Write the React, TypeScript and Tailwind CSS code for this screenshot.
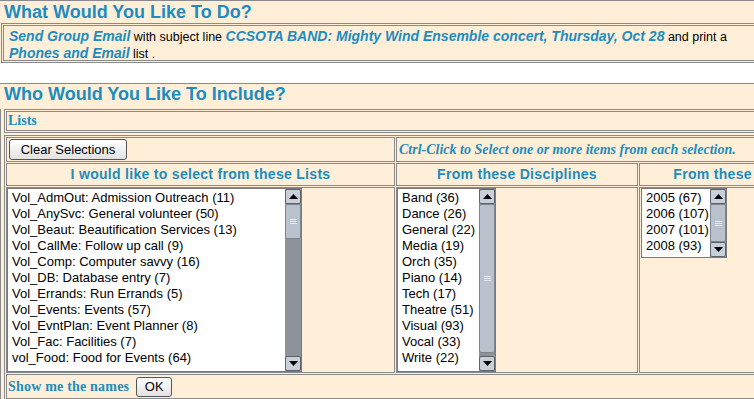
import React from 'react';

const lists = [
  'Vol_AdmOut: Admission Outreach (11)',
  'Vol_AnySvc: General volunteer (50)',
  'Vol_Beaut: Beautification Services (13)',
  'Vol_CallMe: Follow up call (9)',
  'Vol_Comp: Computer savvy (16)',
  'Vol_DB: Database entry (7)',
  'Vol_Errands: Run Errands (5)',
  'Vol_Events: Events (57)',
  'Vol_EvntPlan: Event Planner (8)',
  'Vol_Fac: Facilities (7)',
  'vol_Food: Food for Events (64)',
];

const disciplines = [
  'Band (36)', 'Dance (26)', 'General (22)', 'Media (19)', 'Orch (35)', 'Piano (14)',
  'Tech (17)', 'Theatre (51)', 'Visual (93)', 'Vocal (33)', 'Write (22)',
];

const years = ['2005 (67)', '2006 (107)', '2007 (101)', '2008 (93)'];

function Arrow({ down }: { down?: boolean }) {
  return (
    <svg width="9" height="5" viewBox="0 0 9 5">
      <path d={down ? 'M0 0h9L4.5 5z' : 'M0 5h9L4.5 0z'} fill="#000" />
    </svg>
  );
}

function ScrollBar({ thumb }: { thumb: string }) {
  return (
    <div className="flex w-[16px] shrink-0 flex-col bg-[#8e9299]">
      <div className="flex h-[15px] items-center justify-center rounded-[2px] border border-[#5f646c] bg-[#c8cfd8]">
        <Arrow />
      </div>
      <div className={`flex flex-col items-center justify-center gap-px rounded-[2px] border border-[#7d8591] bg-[#b9c1cc] ${thumb}`}>
        <div className="h-px w-[7px] bg-[#e6eaef]" />
        <div className="h-px w-[7px] bg-[#e6eaef]" />
        <div className="h-px w-[7px] bg-[#e6eaef]" />
      </div>
      <div className="flex-1" />
      <div className="flex h-[15px] items-center justify-center rounded-[2px] border border-[#5f646c] bg-[#c8cfd8]">
        <Arrow down />
      </div>
    </div>
  );
}

function ListBox({ items, size, thumb }: { items: string[]; size: string; thumb: string }) {
  return (
    <div className={`flex border border-[#7a7a7a] bg-white ${size}`}>
      <div className="flex-1 overflow-hidden pl-[4px] pt-px text-[13px] leading-[16px] text-black">
        {items.map((item) => (
          <div key={item} className="whitespace-nowrap">{item}</div>
        ))}
      </div>
      <ScrollBar thumb={thumb} />
    </div>
  );
}

function XpButton({ label, size }: { label: string; size: string }) {
  return (
    <button className={`rounded-[3px] border border-[#555] bg-linear-to-b from-white to-[#e2e2e2] text-[13px] leading-none text-black ${size}`}>
      {label}
    </button>
  );
}

export default function App() {
  return (
    <div className="h-[399px] w-[754px] overflow-hidden bg-white font-['Liberation_Sans',Arial,sans-serif] text-black">
      <div className="w-[860px]">
        {/* what to do */}
        <div className="border-t border-[#8a8a8a] bg-[#ffefd9]">
          <h2 className="h-[22px] pl-[4px] text-[18px] font-bold leading-[22px] text-[#1c8dbe]">
            What Would You Like To Do?
          </h2>
          <div className="ml-px border border-[#8a8a8a] p-px">
            <div className="h-[36px] border border-[#8a8a8a] pl-[5px] pt-[2px] text-[12.5px] leading-[16px]">
              <b className="text-[14px] italic text-[#1c8dbe]">Send Group Email</b> with subject line{' '}
              <b className="text-[14px] italic text-[#1c8dbe]">CCSOTA BAND: Mighty Wind Ensemble concert, Thursday, Oct 28</b> and print a
              <br />
              <b className="text-[14px] italic text-[#1c8dbe]">Phones and Email</b> list .
            </div>
          </div>
        </div>

        {/* who to include */}
        <div className="mt-[20px] border-t border-[#8a8a8a] bg-[#ffefd9]">
          <h2 className="h-[25px] pl-[4px] text-[18px] font-bold leading-[20px] text-[#1c8dbe]">
            Who Would You Like To Include?
          </h2>
          <div className="border-l border-[#8a8a8a] pl-[3px]">
            <div className="border border-[#8a8a8a] p-px">
              <div className="h-[20px] border border-[#8a8a8a] pl-px font-['Liberation_Serif','Times_New_Roman',serif] text-[14px] font-bold leading-[18px] text-[#1c8dbe]">
                Lists
              </div>
            </div>

            <div className="mt-[2px] border border-[#8a8a8a] p-px">
              <div className="grid grid-cols-[389px_242px_190px] gap-px">
                <div className="flex h-[25px] items-center border border-[#8a8a8a] pl-[2px]">
                  <XpButton label="Clear Selections" size="h-[21px] w-[118px]" />
                </div>
                <div className="col-span-2 flex h-[25px] items-center border border-[#8a8a8a] pl-[2px] font-['Liberation_Serif','Times_New_Roman',serif] text-[14px] font-bold italic text-[#1c8dbe]">
                  Ctrl-Click to Select one or more items from each selection.
                </div>

                <div className="h-[23px] border border-[#8a8a8a] text-center text-[14px] font-bold leading-[21px] tracking-[0.3px] text-[#1c8dbe]">
                  I would like to select from these Lists
                </div>
                <div className="h-[23px] border border-[#8a8a8a] text-center text-[14px] font-bold leading-[21px] tracking-[0.3px] text-[#1c8dbe]">
                  From these Disciplines
                </div>
                <div className="h-[23px] border border-[#8a8a8a] text-center text-[14px] font-bold leading-[21px] tracking-[0.3px] text-[#1c8dbe]">
                  From these Years
                </div>

                <div className="h-[186px] border border-[#8a8a8a]">
                  <ListBox items={lists} size="h-[184px] w-[295px]" thumb="h-[35px]" />
                </div>
                <div className="h-[186px] border border-[#8a8a8a]">
                  <ListBox items={disciplines} size="h-[184px] w-[99px]" thumb="h-[149px]" />
                </div>
                <div className="h-[186px] border border-[#8a8a8a] pl-px">
                  <ListBox items={years} size="h-[70px] w-[86px]" thumb="h-[38px]" />
                </div>

                <div className="col-span-3 flex h-[25px] items-center gap-[7px] border border-[#8a8a8a] pl-px">
                  <span className="font-['Liberation_Serif','Times_New_Roman',serif] text-[14px] font-bold tracking-[0.2px] text-[#1c8dbe]">
                    Show me the names
                  </span>
                  <XpButton label="OK" size="h-[20px] w-[36px]" />
                </div>
              </div>
            </div>
          </div>
        </div>
      </div>
    </div>
  );
}
